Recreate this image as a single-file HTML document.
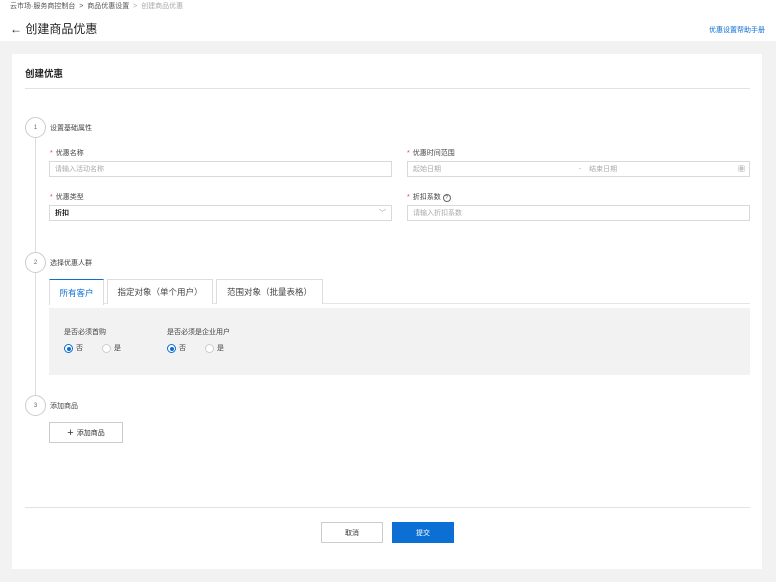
<!DOCTYPE html>
<html><head><meta charset="utf-8"><style>
*{box-sizing:border-box;margin:0;padding:0}
body{width:776px;height:582px;background:#f2f2f2;font-family:"Liberation Sans","Noto Sans CJK SC",sans-serif;color:#333;position:relative;overflow:hidden}
.a{position:absolute}
.top{left:0;top:0;width:776px;height:41px;background:#fff}
.bc{left:10px;top:1px;font-size:7px;color:#555}
.bc span{color:#aaa}
.title{left:10px;top:20px;font-size:12px;color:#222}
.help{right:11px;top:25px;font-size:7px;color:#0b6fd3}
.card{left:12px;top:54px;width:750px;height:515px;background:#fff}
.h{font-size:9.5px;font-weight:bold;color:#222}
.line{height:1px;background:#e2e2e2}
.circ{width:21px;height:21px;border:1px solid #ccc;border-radius:50%;font-size:6px;color:#666;display:flex;align-items:center;justify-content:center;background:#fff}
.lab{font-size:7px;color:#444}
.lab b{color:#e54545;font-weight:normal;margin-right:3px}
.inp{height:16px;border:1px solid #d9d9d9;font-size:7px;color:#aaa;padding-left:5px;display:flex;align-items:center}
.tab{height:25px;border:1px solid #ddd;border-bottom:none;font-size:8.5px;color:#444;display:flex;align-items:center;justify-content:center;background:#fff}
.radio{width:9px;height:9px;border:1px solid #ccc;border-radius:50%;background:#fff}
.radio.on{border-color:#0b6fd3}
.radio.on::after{content:"";position:absolute;left:1.5px;top:1.5px;width:4px;height:4px;border-radius:50%;background:#0b6fd3}
.btn{height:21px;font-size:7px;display:flex;align-items:center;justify-content:center}
</style></head><body>
<div class="a top"></div>
<div class="a bc">云市场·服务商控制台 &nbsp;&gt;&nbsp; 商品优惠设置 &nbsp;<span>&gt;&nbsp; 创建商品优惠</span></div>
<div class="a title">← 创建商品优惠</div>
<div class="a help">优惠设置帮助手册</div>
<div class="a card"></div>
<div class="a h" style="left:25px;top:66px">创建优惠</div>
<div class="a line" style="left:25px;top:88px;width:725px"></div>
<div class="a" style="left:35px;top:127px;width:1px;height:280px;background:#ddd"></div>
<div class="a circ" style="left:25px;top:117px">1</div>
<div class="a lab" style="left:50px;top:123px">设置基础属性</div>
<div class="a lab" style="left:50px;top:148px"><b>*</b>优惠名称</div>
<div class="a inp" style="left:49px;top:161px;width:343px">请输入活动名称</div>
<div class="a lab" style="left:50px;top:192px"><b>*</b>优惠类型</div>
<div class="a inp" style="left:49px;top:205px;width:343px;color:#222;font-weight:bold">折扣<span style="position:absolute;right:5px;top:2px;color:#999;font-weight:normal">﹀</span></div>
<div class="a lab" style="left:407px;top:148px"><b>*</b>优惠时间范围</div>
<div class="a inp" style="left:407px;top:161px;width:343px">起始日期<span style="position:absolute;left:171px">-&nbsp;&nbsp;&nbsp;&nbsp;结束日期</span><span style="position:absolute;right:4px;color:#888">▦</span></div>
<div class="a lab" style="left:407px;top:192px"><b>*</b>折扣系数 <span style="display:inline-block;width:8px;height:8px;border:1px solid #666;border-radius:50%;font-size:5px;text-align:center;line-height:6px">?</span></div>
<div class="a inp" style="left:407px;top:205px;width:343px">请输入折扣系数</div>
<div class="a circ" style="left:25px;top:252px">2</div>
<div class="a lab" style="left:50px;top:258px">选择优惠人群</div>
<div class="a" style="left:49px;top:303px;width:701px;height:1px;background:#e5e5e5"></div>
<div class="a tab" style="left:49px;top:279px;width:55px;color:#0b6fd3;border-top:1px solid #0b6fd3;height:26px">所有客户</div>
<div class="a tab" style="left:107px;top:279px;width:106px">指定对象（单个用户）</div>
<div class="a tab" style="left:216px;top:279px;width:107px">范围对象（批量表格）</div>
<div class="a" style="left:49px;top:308px;width:701px;height:67px;background:#f2f2f2"></div>
<div class="a lab" style="left:64px;top:327px">是否必须首购</div>
<div class="a lab" style="left:167px;top:327px">是否必须是企业用户</div>
<div class="a radio on" style="left:64px;top:344px"></div><div class="a lab" style="left:76px;top:343px">否</div>
<div class="a radio" style="left:102px;top:344px"></div><div class="a lab" style="left:114px;top:343px">是</div>
<div class="a radio on" style="left:167px;top:344px"></div><div class="a lab" style="left:179px;top:343px">否</div>
<div class="a radio" style="left:205px;top:344px"></div><div class="a lab" style="left:217px;top:343px">是</div>
<div class="a circ" style="left:25px;top:395px">3</div>
<div class="a lab" style="left:50px;top:401px">添加商品</div>
<div class="a btn" style="left:49px;top:422px;width:74px;border:1px solid #ccc;color:#333"><span style="font-size:11px;margin-right:3px">+</span>添加商品</div>
<div class="a line" style="left:25px;top:507px;width:725px"></div>
<div class="a btn" style="left:321px;top:522px;width:62px;border:1px solid #ccc">取消</div>
<div class="a btn" style="left:392px;top:522px;width:62px;background:#0b6fd3;color:#fff">提交</div>
</body></html>
